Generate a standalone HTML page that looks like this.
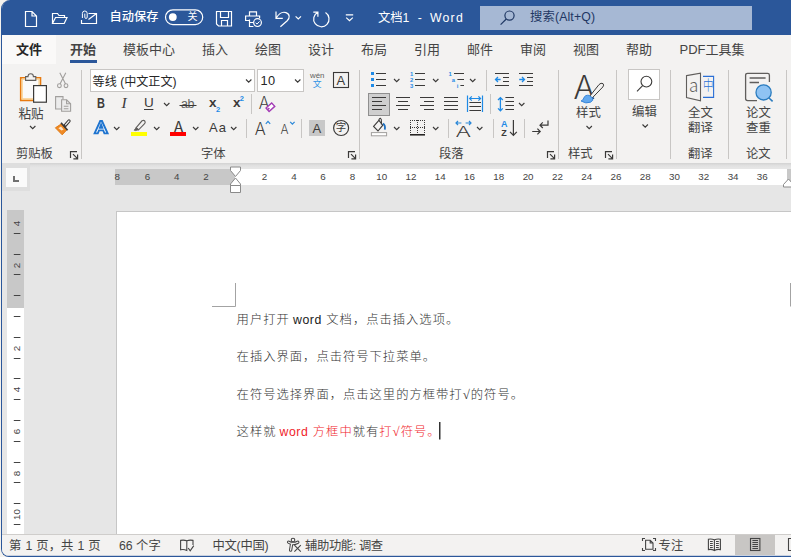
<!DOCTYPE html>
<html lang="zh-CN">
<head>
<meta charset="utf-8">
<title>文档1 - Word</title>
<style>
*{box-sizing:border-box;margin:0;padding:0}
html,body{width:791px;height:557px;overflow:hidden;background:#f4f2ee}
body{font-family:"Liberation Sans","Noto Sans CJK SC",sans-serif;color:#444;position:relative;font-size:13px}
.abs{position:absolute}
#win{position:absolute;left:1px;top:0;width:790px;height:557px;background:#e6e6e6;border-left:1px solid #2b579a;border-bottom:1px solid #2b579a;border-top-left-radius:9px;border-bottom-left-radius:8px;overflow:hidden}
#edge{position:absolute;left:0;top:0;width:2px;height:557px;background:#f4f1ec}
#title{position:absolute;left:0;top:0;width:791px;height:35px;background:#2b579a}
.t{position:absolute;white-space:nowrap;color:#fff}
#search{position:absolute;left:480px;top:6px;width:272px;height:24px;background:#a6b8d4}
#tabs{position:absolute;left:0;top:35px;width:791px;height:30px;background:#f3f2f1}
.tab{position:absolute;top:35px;height:29px;line-height:29px;font-size:13px;color:#444;white-space:nowrap}
#filetab{position:absolute;left:2px;top:35px;width:54px;height:30px;background:#faf9f8}
#ribbon{position:absolute;left:0;top:64px;width:791px;height:99px;background:#f3f2f1}
#shadow{position:absolute;left:0;top:163px;width:791px;height:5px;background:linear-gradient(#d2d2d2,#e0e0e0 50%,#e6e6e6)}
.lbl{position:absolute;font-size:12.3px;color:#444;white-space:nowrap;line-height:16px}
.ng{font-size:5.9px;line-height:6px;font-weight:bold;color:#1e8ae6}
.box{position:absolute;background:#fff;border:1px solid #c8c6c4}
svg{position:absolute;left:0;top:0;overflow:visible}
#status{position:absolute;left:0;top:534px;width:791px;height:21px;background:#f3f2f1;border-top:1px solid #cfcdcb}
.s{position:absolute;top:537.7px;font-size:12.3px;line-height:16px;color:#444;white-space:nowrap}
#botline{position:absolute;left:0;top:555px;width:791px;height:1px;background:#c9d1df}
#page{position:absolute;left:116px;top:211px;width:680px;height:323px;background:#fff;border-left:1px solid #c6c6c6;border-top:1px solid #c6c6c6}
.doc{position:absolute;left:236.6px;font-size:12.3px;line-height:16px;color:#333;white-space:nowrap;letter-spacing:1px;font-weight:300}
.red{color:#f0242a}
.rn{position:absolute;top:170.3px;font-size:9.8px;line-height:13px;color:#444;width:24px;text-align:center;white-space:nowrap}
.vn{position:absolute;left:4.1px;margin-top:0.5px;font-size:9.8px;line-height:13px;color:#444;width:24px;height:13px;text-align:center;transform:rotate(-90deg);white-space:nowrap}
</style>
</head>
<body>
<div id="win">
<div style="position:absolute;left:-2px;top:0;width:791px;height:557px">
<div id="title"></div>
<div id="search"></div>
<span class="t" style="left:109.6px;top:8.6px;font-size:12.2px;line-height:16px;font-weight:500">自动保存</span>
<span class="t" style="left:378px;top:9.5px;font-size:12.3px;line-height:16px">文档1</span><span class="t" style="left:417.8px;top:9.5px;font-size:12.3px;line-height:16px">-</span><span class="t" style="left:430px;top:9.5px;font-size:12.3px;line-height:16px;letter-spacing:1.2px">Word</span>
<span class="t" style="left:530px;top:9px;font-size:12.3px;line-height:16px;color:#1f3763;letter-spacing:0.15px">搜索(Alt+Q)</span>
<span class="t" style="left:187.6px;top:10px;font-size:10px;line-height:14px">关</span>
<svg width="791" height="35" viewBox="0 0 791 35" fill="none" stroke="#fff" stroke-width="1.2" stroke-linejoin="miter">
<!-- new doc -->
<path d="M25.5 11.5 H32 L36.5 16 V26.5 H25.5 Z M32 11.5 V16 H36.5"/>
<!-- open folder -->
<path d="M52.5 23.5 V13.5 H57.5 L59 15.5 H64.5 V17.5 M52.5 23.5 L55.5 17.5 H67 L64.2 23.5 Z"/>
<!-- mail w/ clip -->
<path d="M88.5 13.5 H96.5 V23.5 H81.5 V20 M96.5 13.5 L88.5 19.5"/>
<path d="M82.4 18 V13.4 a2.4 2.4 0 0 1 4.8 0 V17.2 a1.2 1.2 0 0 1 -2.4 0 V13.6" stroke-width="1"/>
<!-- toggle -->
<rect x="165.5" y="9.8" width="37.2" height="14.8" rx="7.4"/>
<circle cx="172.8" cy="17.1" r="3.9" fill="#fff" stroke="none"/>
<!-- save -->
<path d="M216.5 11.5 H231.5 V26 H218.5 L216.5 24 Z M220.5 11.5 V17.5 H228.5 V11.5 M221.5 26 V20.5 H227.5 V26"/>
<!-- printer check -->
<path d="M249.5 16 V11.8 H256.5 V16 M253 22.5 H249.5 M249.5 20.5 H245.6 V16 H259.6 V18.2 M249.5 19.5 V26.5 H253.4"/>
<circle cx="257.5" cy="22.6" r="3.9"/>
<path d="M255.6 22.7 L257 24.1 L259.5 21.4" stroke-width="1"/>
<!-- undo -->
<path d="M276 11.4 V18.3 H282.8 M276.2 18 C279 13.5 283 11.6 286 12.6 C289.8 13.8 290.2 18 287.2 20.8 L280.4 26.8"/>
<path d="M295.6 16.4 L298.3 18.9 L301 16.4"/>
<!-- redo -->
<path d="M313.3 12.1 H317.9 V16.7 M317.9 12.2 A7.7 7.7 0 1 0 325.5 12.6"/>
<!-- customize -->
<path d="M345.8 14.9 H353.2 M346.2 17.6 L349.5 20.6 L352.8 17.6"/>
<!-- search icon -->
<g stroke="#1f3763" stroke-width="1.2"><circle cx="509.5" cy="15.6" r="4.6"/><path d="M506.3 19 L500.6 24.6"/></g>
</svg>
<div id="tabs"></div><div id="filetab"></div>
<span class="tab" style="left:16px;font-weight:bold;color:#262626">文件</span>
<span class="tab" style="left:70px;font-weight:bold;color:#444">开始</span>
<div class="abs" style="left:70px;top:60px;width:27px;height:3px;background:#2b579a"></div>
<span class="tab" style="left:123px">模板中心</span>
<span class="tab" style="left:202px">插入</span>
<span class="tab" style="left:255px">绘图</span>
<span class="tab" style="left:308px">设计</span>
<span class="tab" style="left:361px">布局</span>
<span class="tab" style="left:414px">引用</span>
<span class="tab" style="left:467px">邮件</span>
<span class="tab" style="left:520px">审阅</span>
<span class="tab" style="left:573px">视图</span>
<span class="tab" style="left:626px">帮助</span>
<span class="tab" style="left:679.5px">PDF工具集</span>
<div id="ribbon"></div>
<div id="shadow"></div>
<!-- ribbon boxes -->
<div class="box" style="left:90px;top:69px;width:165px;height:23px"></div>
<div class="box" style="left:257px;top:69px;width:47px;height:23px"></div>
<div class="abs" style="left:368px;top:93px;width:22px;height:23px;background:#cfcfcf;border:1px solid #8f8f8f"></div>
<div class="abs" style="left:309px;top:120px;width:16px;height:16px;background:#c8c8c8"></div>
<div class="box" style="left:628px;top:69px;width:32px;height:31px"></div>
<!-- ribbon texts -->
<span class="lbl" style="left:18.5px;top:105.8px;font-size:12.6px">粘贴</span>
<span class="lbl" style="left:16px;top:146px">剪贴板</span>
<span class="lbl" style="left:92.6px;top:73.6px;font-size:12.1px;color:#262626">等线 (中文正文)</span>
<span class="lbl" style="left:260.6px;top:72.8px;font-size:12.8px;color:#262626;letter-spacing:0.2px">10</span>
<span class="lbl" style="left:201px;top:145.5px">字体</span>
<span class="lbl" style="left:439px;top:145.5px">段落</span>
<span class="lbl" style="left:568px;top:145.5px">样式</span>
<span class="lbl" style="left:576px;top:105px;font-size:12.4px">样式</span>
<span class="lbl" style="left:632px;top:103.7px;font-size:12.4px">编辑</span>
<span class="lbl" style="left:688px;top:105.2px;font-size:12.4px">全文</span>
<span class="lbl" style="left:688px;top:119.7px;font-size:12.4px">翻译</span>
<span class="lbl" style="left:688px;top:145.5px">翻译</span>
<span class="lbl" style="left:746px;top:105.2px;font-size:12.4px">论文</span>
<span class="lbl" style="left:746px;top:119.7px;font-size:12.4px">查重</span>
<span class="lbl" style="left:746px;top:145.5px">论文</span>
<!-- font row 2 glyph buttons -->
<span class="lbl" style="left:97px;top:95px;font-size:14.8px;font-weight:bold;color:#3b3a39;transform:scaleX(.74);transform-origin:0 0">B</span>
<span class="lbl" style="left:121.5px;top:95px;font-size:15.5px;font-style:italic;font-family:'Liberation Serif',serif;color:#3b3a39">I</span>
<span class="lbl" style="left:144px;top:94.5px;font-size:13.5px;color:#3b3a39">U</span>
<span class="lbl" style="left:181px;top:96px;font-size:12.5px;color:#605e5c;letter-spacing:-0.5px">ab</span>
<span class="lbl" style="left:209px;top:95px;font-size:13.5px;font-weight:bold;color:#3b3a39">x</span>
<span class="lbl" style="left:216px;top:105.5px;font-size:7.5px;font-weight:bold;color:#1e8ae6;line-height:8px">2</span>
<span class="lbl" style="left:233px;top:95px;font-size:13.5px;font-weight:bold;color:#3b3a39">x</span>
<span class="lbl" style="left:239.8px;top:95px;font-size:7.5px;font-weight:bold;color:#1e8ae6;line-height:8px">2</span>
<span class="lbl" style="left:259px;top:90.5px;font-size:17.5px;line-height:22px;color:#3b3a39;font-weight:300;font-family:'Noto Sans CJK SC','Liberation Sans',sans-serif">A</span>
<!-- font row 3 -->
<span class="lbl" style="left:174px;top:115.5px;font-size:15px;line-height:20px;color:#3b3a39;font-weight:400;font-family:'Noto Sans CJK SC','Liberation Sans',sans-serif">A</span>
<span class="lbl" style="left:209px;top:120px;font-size:13px;color:#3b3a39;letter-spacing:1.2px">Aa</span>
<span class="lbl" style="left:255px;top:116.4px;font-size:17.8px;line-height:22px;color:#3b3a39;font-weight:300;font-family:'Noto Sans CJK SC','Liberation Sans',sans-serif">A</span>
<span class="lbl" style="left:280.8px;top:120.8px;font-size:12.8px;line-height:16px;color:#3b3a39;font-weight:300;font-family:'Noto Sans CJK SC','Liberation Sans',sans-serif">A</span>
<span class="lbl" style="left:312.6px;top:120.6px;font-size:13px;color:#3b3a39">A</span>
<span class="lbl" style="left:335.8px;top:121.4px;font-size:10.5px;line-height:13px;color:#3b3a39">字</span>
<span class="lbl" style="left:310px;top:71.4px;font-size:7.9px;line-height:9px;color:#605e5c">wén</span>
<span class="lbl" style="left:312.8px;top:78.6px;font-size:8.8px;line-height:11px;color:#2f95e6">文</span>
<span class="lbl" style="left:336.5px;top:72.5px;font-size:13px;color:#3b3a39">A</span>
<!-- paragraph text glyphs -->
<span class="lbl" style="left:455.6px;top:121.6px;font-size:15px;line-height:18px;color:#3b3a39;font-weight:300;font-family:'Noto Sans CJK SC','Liberation Sans',sans-serif;transform:scaleX(1.66);transform-origin:0 0">A</span>
<span class="lbl" style="left:501px;top:118.6px;font-size:9px;line-height:10px;font-weight:bold;color:#1e8ae6">A</span>
<span class="lbl" style="left:501.2px;top:127.6px;font-size:9px;line-height:10px;font-weight:bold;color:#3b3a39">Z</span>
<!-- numbering glyphs -->
<span class="lbl ng" style="left:410px;top:71.2px">1</span>
<span class="lbl ng" style="left:410px;top:77.2px">2</span>
<span class="lbl ng" style="left:410px;top:83.2px">3</span>
<span class="lbl ng" style="left:448.6px;top:71.2px">1</span>
<span class="lbl ng" style="left:451.8px;top:77px">a</span>
<span class="lbl ng" style="left:456.8px;top:83px">i</span>
<!-- styles big A -->
<span class="lbl" style="left:573.6px;top:67.6px;font-size:33px;line-height:34px;color:#3b3a39;font-weight:300;font-family:'Noto Sans CJK SC','Liberation Sans',sans-serif;transform:scaleX(1.05);transform-origin:0 0">A</span>
<!-- translate glyphs -->
<span class="lbl" style="left:689.4px;top:72px;font-size:18.5px;line-height:24px;color:#605e5c;font-weight:300;font-family:'Noto Sans CJK SC','Liberation Sans',sans-serif;transform:scaleX(.92);transform-origin:0 0">a</span>
<span class="lbl" style="left:702.6px;top:77px;font-size:13.5px;line-height:18px;color:#2b6fd6;font-weight:300;transform:scaleX(.78);transform-origin:0 0">中</span>
<svg width="791" height="170" viewBox="0 0 791 170" fill="none" stroke="#3b3a39" stroke-width="1.1">
<defs>
<path id="chev" d="M0 0 L2.7 2.6 L5.4 0" fill="none" stroke="#3b3a39" stroke-width="1.15"/>
<path id="launch" d="M0.5 7 V0.6 H7 M3 3.2 L7.5 7.7 M7.6 3.6 V7.8 H3.4" fill="none" stroke="#3b3a39" stroke-width="1.2"/>
</defs>
<!-- separators -->
<g stroke="#c8c6c4" stroke-width="1">
<path d="M81.5 70 V159 M359.5 70 V159 M558.5 70 V159 M616.5 70 V159 M670.5 70 V159 M728.5 70 V159 M786.5 70 V159"/>
<path d="M251.5 94 V114 M246.5 119 V138 M301.5 119 V138 M486.5 70 V91 M490.5 94 V114 M448.5 119 V138 M493.5 119 V138 M524.5 119 V138"/>
</g>
<!-- launchers -->
<use href="#launch" x="70" y="151"/><use href="#launch" x="348" y="151"/><use href="#launch" x="547" y="151"/><use href="#launch" x="605" y="151"/>
<!-- chevrons -->
<use href="#chev" x="30" y="126"/>
<use href="#chev" x="246" y="79.5"/><use href="#chev" x="295" y="79.5"/>
<use href="#chev" x="164" y="103"/>
<use href="#chev" x="114" y="127"/><use href="#chev" x="154" y="127"/><use href="#chev" x="193" y="127"/><use href="#chev" x="231" y="127"/>
<use href="#chev" x="394" y="79"/><use href="#chev" x="433" y="79"/><use href="#chev" x="470" y="79"/>
<use href="#chev" x="519" y="103"/>
<use href="#chev" x="394" y="127"/><use href="#chev" x="433" y="127"/><use href="#chev" x="477" y="127"/>
<use href="#chev" x="586.5" y="126"/><use href="#chev" x="642.5" y="124.5"/>
<!-- paste -->
<rect x="22.6" y="79.6" width="16" height="19" fill="#fafafa" stroke="none"/><path d="M26 77.7 H20.7 V100.4 H33 M35.5 77.7 H40.5 V85" stroke="#e87a10" stroke-width="1.6"/>
<path d="M22.1 79.1 H26 M35.5 79.1 H39.1 V85 M22.1 79.1 V99 H33" stroke="#fbd08c" stroke-width="1.3"/>
<path d="M25.6 80.4 V76.6 H28 C28 72.8 33.4 72.8 33.4 76.6 H35.8 V80.4 Z" stroke="#605e5c" fill="#f3f2f1"/>
<rect x="33.6" y="85.6" width="12.8" height="16.6" fill="#fff" stroke="#3b3a39" stroke-width="1.2"/>
<!-- scissors (disabled) -->
<g stroke="#a19f9d" stroke-width="1.1"><path d="M59.8 72.8 L65.6 84 M65.8 72.8 L60 84"/><circle cx="59.4" cy="85.7" r="1.9"/><circle cx="66" cy="85.7" r="1.9"/></g>
<!-- copy (disabled) -->
<g stroke="#a19f9d" stroke-width="1.1"><path d="M63 99.6 V96.6 H55.6 V109 H61.6" fill="#ececec"/><path d="M61.6 99.8 H66.6 L70.6 103.8 V111.2 H61.6 Z" fill="#ececec"/><path d="M66.6 99.8 V103.8 H70.6 M63.8 106.2 H68.4 M63.8 108.8 H68.4" /></g>
<!-- format painter -->
<path d="M55.4 127.8 L61.2 124 L66.6 130 L62.2 134.8 Z" fill="#f08a24" stroke="#e07a14" stroke-width="1"/><path d="M58.4 128.2 L61 126.6 L63.6 129.4 L61.6 130.6 Z" fill="#fce6cc" stroke="none"/>
<path d="M61 122.8 L67.6 130.2" stroke="#3b3a39" stroke-width="1.7"/><path d="M65 125.6 L69 121" stroke="#3b3a39" stroke-width="3.4" stroke-linecap="round"/><path d="M65.6 124.9 L69 121" stroke="#f3f2f1" stroke-width="1.2" stroke-linecap="round"/>
<!-- underline bar, strike -->
<path d="M144 109.5 H153.4" stroke-width="1.1"/>
<path d="M179.5 105.5 H196.5" stroke-width="1"/>
<!-- clear formatting eraser -->
<g transform="rotate(-42 270.4 107.2)"><rect x="266.6" y="104.9" width="7.6" height="4.6" stroke="#a33bb5" stroke-width="1.4" fill="#fff"/><path d="M267 107.2 H269" stroke="#a33bb5" stroke-width="1.6"/></g>
<!-- text effects A -->
<path d="M94.6 133.4 L100.2 121 H102 L107.6 133.4 H104.4 L103.2 130.4 H99 L97.8 133.4 Z M99.9 127.8 H102.3 L101.1 124.6 Z" stroke="#1f74cf" stroke-width="1.9" fill="#fff"/>
<!-- highlighter -->
<rect x="131" y="132" width="16" height="4" fill="#ffff00" stroke="none"/>
<path d="M136 127.8 L142 120.8 Q144 119.8 145 121.4 Q145.6 122.6 144.6 123.6 L138.6 129.8 Z" stroke="#605e5c"/>
<path d="M136 127.8 L138.6 129.8 L135.4 130.6 L134.2 130.2 Z" fill="#605e5c" stroke="#605e5c" stroke-width="0.8"/>
<!-- font color bar -->
<rect x="170" y="132" width="16" height="4" fill="#ff0000" stroke="none"/>
<!-- grow/shrink carets -->
<path d="M265.8 123.8 L268 121.4 L270.2 123.8" stroke="#2b88d8" stroke-width="1.2"/>
<path d="M290.2 121.8 L292.4 124.2 L294.6 121.8" stroke="#2b88d8" stroke-width="1.2"/>
<!-- char border box / enclosed char -->
<rect x="333.5" y="72.5" width="15" height="15" stroke="#3b3a39" stroke-width="1.1"/>
<circle cx="341.1" cy="128" r="7.5" stroke="#3b3a39" stroke-width="1.2"/>
<!-- bullets -->
<g fill="#1e8ae6" stroke="none"><rect x="371" y="72" width="3" height="3"/><rect x="371" y="78" width="3" height="3"/><rect x="371" y="84" width="3" height="3"/></g>
<path d="M376 73.5 H386 M376 79.5 H386 M376 85.5 H386"/>
<!-- numbering lines -->
<path d="M415 73.5 H425 M415 79.5 H425 M415 85.5 H425"/>
<!-- multilevel lines -->
<path d="M454 73.5 H464 M457.4 79.5 H464 M460.4 85.5 H464"/>
<!-- decrease indent -->
<path d="M495 73.5 H509 M503 77.5 H509 M503 81.5 H509 M495 85.5 H509"/>
<path d="M495.6 79.5 H500.6 M498 77 L495.5 79.5 L498 82" stroke="#1e8ae6" stroke-width="1.3"/>
<!-- increase indent -->
<path d="M519 73.5 H533 M527 77.5 H533 M527 81.5 H533 M519 85.5 H533"/>
<path d="M519.2 79.5 H524.4 M522 77 L524.5 79.5 L522 82" stroke="#1e8ae6" stroke-width="1.3"/>
<!-- align icons -->
<path d="M372 97.5 H386 M372 101.5 H382 M372 105.5 H386 M372 109.5 H382" stroke-width="1.1"/>
<path d="M396 97.5 H410 M398 101.5 H408 M396 105.5 H410 M398 109.5 H408" stroke-width="1.1"/>
<path d="M420 97.5 H434 M424 101.5 H434 M420 105.5 H434 M424 109.5 H434" stroke-width="1.1"/>
<path d="M444 97.5 H458 M444 101.5 H458 M444 105.5 H458 M444 109.5 H458" stroke-width="1.1"/>
<!-- distributed -->
<path d="M467.5 95.6 V112 M482.5 95.6 V112 M469.6 98.5 H480.6 M471.8 96.3 L469.6 98.5 L471.8 100.7 M478.4 96.3 L480.6 98.5 L478.4 100.7" stroke="#1e8ae6" stroke-width="1.2"/>
<path d="M469.4 102.5 H481 M469.4 106.5 H481 M469.4 110.5 H481" stroke-width="1.1"/>
<!-- line spacing -->
<path d="M500.4 97.6 V110.8 M498 100 L500.4 97.6 L502.8 100 M498 108.4 L500.4 110.8 L502.8 108.4" stroke="#1e8ae6" stroke-width="1.3"/>
<path d="M505.4 97.5 H514 M505.4 101.5 H514 M505.4 105.5 H514 M505.4 109.5 H514" stroke-width="1.1"/>
<!-- shading bucket -->
<rect x="371.4" y="132.6" width="15.2" height="3.2" fill="#fff" stroke="#a19f9d" stroke-width="1"/>
<path d="M373.6 126.4 L378.9 120.4 L382.8 125.2 L378 131 Z" />
<path d="M378.9 120.6 Q379.2 118 380.6 118.4 Q381.6 118.8 381.4 121.4 V124.6"/>
<path d="M383 123.6 Q385.6 125.4 384.8 129.6" stroke="#1e6fc0" stroke-width="1.8"/>
<!-- borders -->
<path d="M410 120.5 H425 M410 127.5 H425 M410.5 120 V134 M417.5 120 V134 M424.5 120 V134" stroke-dasharray="1 1" stroke-width="1" stroke="#3b3a39"/>
<path d="M410 134.8 H425" stroke-width="1.5" stroke="#1b1a19"/>
<!-- char scaling arrows -->
<path d="M456 123 H461.4 M458 121 L456 123 L458 125 M465.6 123 H471 M469 121 L471 123 L469 125" stroke="#2b88d8" stroke-width="1.2"/>
<!-- sort arrow -->
<path d="M513.4 120 V135.2 M510 131.8 L513.4 135.4 L516.8 131.8" stroke-width="1.2"/>
<!-- show marks -->
<path d="M532.2 131.5 H540.2 M537.4 128.7 L540.2 131.5 L537.4 134.3 M548 120.4 V125.2 H540 M542.8 122.4 L540 125.2 L542.8 128" stroke-width="1.2"/>
<!-- styles brush -->
<path d="M603 83.6 Q601 82.4 599 84.6 L589.6 96.4 L591.8 98.4 L602.8 87 Q604.4 85 603 83.6 Z" fill="#f3f2f1" stroke="#3b3a39" stroke-width="1"/>
<path d="M589.2 95.4 Q585 94.6 583.8 98 Q583.2 100.4 581 101 Q586 104.2 590.6 102.2 Q594 100.4 592.4 97.8 Z" fill="#62a8ee" stroke="#2f7fd6" stroke-width="0.9"/>
<!-- edit magnifier -->
<circle cx="646.4" cy="81.6" r="5.4" stroke-width="1.1"/><path d="M642.6 85.6 L637 91.4" stroke-width="1.1"/>
<!-- translate icon -->
<path d="M686.5 75.6 L700.5 73.2 V100.8 L686.5 97.6 Z" stroke="#605e5c" stroke-width="1.1"/>
<path d="M703 76.4 H713.6 V97.4 H703" stroke="#2b6fd6" stroke-width="1.1"/>
<!-- paper check -->
<path d="M757 100.6 H747.6 Q745.6 100.6 745.6 98.6 V75.2 Q745.6 73.4 747.6 73.4 H767.6 Q769.4 73.4 769.4 75.2 V82" stroke="#605e5c" stroke-width="1.3"/>
<path d="M749.6 78 H765.6 M749.6 82.4 H759" stroke="#605e5c" stroke-width="1.5"/>
<circle cx="763.6" cy="92.4" r="7.6" fill="#8fc3f3" stroke="#2b7cbf" stroke-width="1.3"/>
<path d="M769 98 L772.6 101.4" stroke="#2b7cbf" stroke-width="1.6"/>
</svg>
<div class="abs" style="left:115px;top:169px;width:120px;height:16px;background:#c8c8c8"></div>
<div class="abs" style="left:235px;top:169px;width:552px;height:16px;background:#fff"></div>
<div class="abs" style="left:787px;top:169px;width:4px;height:16px;background:#c8c8c8"></div>
<span class="rn" style="left:105.3px">8</span><span class="rn" style="left:135.5px">6</span><span class="rn" style="left:164.7px">4</span><span class="rn" style="left:194.0px">2</span><span class="rn" style="left:252.6px">2</span><span class="rn" style="left:281.9px">4</span><span class="rn" style="left:311.1px">6</span><span class="rn" style="left:340.4px">8</span><span class="rn" style="left:369.7px">10</span><span class="rn" style="left:399.0px">12</span><span class="rn" style="left:428.3px">14</span><span class="rn" style="left:457.5px">16</span><span class="rn" style="left:486.8px">18</span><span class="rn" style="left:516.1px">20</span><span class="rn" style="left:545.4px">22</span><span class="rn" style="left:574.7px">24</span><span class="rn" style="left:603.9px">26</span><span class="rn" style="left:633.2px">28</span><span class="rn" style="left:662.5px">30</span><span class="rn" style="left:691.8px">32</span><span class="rn" style="left:721.1px">34</span><span class="rn" style="left:750.3px">36</span>
<div class="abs" style="left:2px;top:163px;width:28px;height:28px;background:#dedede"></div><div class="abs" style="left:6px;top:168px;width:20.5px;height:19px;background:#fafafa"></div><div class="abs" style="left:13px;top:176px;width:2px;height:6px;background:#707070"></div><div class="abs" style="left:13px;top:180px;width:6px;height:2px;background:#707070"></div>
<div class="abs" style="left:7px;top:210px;width:17px;height:98px;background:#c8c8c8"></div>
<div class="abs" style="left:7px;top:308px;width:17px;height:226px;background:#fff"></div>
<span class="vn" style="top:216.5px">4</span><span class="vn" style="top:258.1px">2</span><span class="vn" style="top:341.3px">2</span><span class="vn" style="top:382.9px">4</span><span class="vn" style="top:424.5px">6</span><span class="vn" style="top:466.1px">8</span><span class="vn" style="top:507.7px">10</span>
<svg width="40" height="557" viewBox="0 0 40 557" stroke="#444" stroke-width="1.2" fill="none"><path d="M13.8 233.5 H20.4 M13.8 254.5 H20.4 M13.8 274.5 H20.4 M13.8 295.5 H20.4 M13.8 316.5 H20.4 M13.8 337.5 H20.4 M13.8 358.5 H20.4 M13.8 378.5 H20.4 M13.8 399.5 H20.4 M13.8 420.5 H20.4 M13.8 441.5 H20.4 M13.8 462.5 H20.4 M13.8 482.5 H20.4 M13.8 503.5 H20.4 M13.8 524.5 H20.4 "/></svg>
<svg width="791" height="200" viewBox="0 0 791 200" fill="#fff" stroke="#8a8a8a" stroke-width="1"><path d="M230.5 167 H240.5 V170.5 L235.5 176.5 L230.5 170.5 Z M235.5 178 L240.5 184 V185.5 H230.5 V184 Z M230.5 185.5 H240.5 V192.5 H230.5 Z"/><path d="M783.5 187 V184.5 L788.5 179 L793.5 184.5 V187 Z"/></svg>
<div id="page"></div>
<svg width="791" height="557" viewBox="0 0 791 557" fill="none" stroke="#a3a3a3" stroke-width="1"><path d="M235.5 283 V306.5 H212 M790.5 283 V306.5"/><path d="M439.8 422 V439.6" stroke="#000" stroke-width="1.2"/></svg>
<div class="doc" style="top:311.5px">用户打开 <span style="letter-spacing:0.55px;font-weight:400;color:#1a1a1a;margin-left:-1.2px">word</span> 文档，点击插入选项。</div>
<div class="doc" style="top:349.4px">在插入界面，点击符号下拉菜单。</div>
<div class="doc" style="top:386.7px">在符号选择界面，点击这里的方框带打<span style="font-family:'Liberation Serif','DejaVu Serif',serif;font-size:13px;line-height:12px;font-weight:400">√</span>的符号。</div>
<div class="doc" style="top:423.6px">这样就 <span class="red"><span style="letter-spacing:0.55px;font-weight:400;margin-left:-1.4px">word</span> 方框中</span>就有<span class="red">打<span style="font-family:'Liberation Serif','DejaVu Serif',serif;font-size:13px;line-height:12px;font-weight:400">√</span>符号。</span></div>
<div id="status"></div>
<div class="abs" style="left:735px;top:535px;width:40px;height:20px;background:#c8c6c4"></div>
<span class="s" style="left:9px;word-spacing:0.7px">第 1 页，共 1 页</span>
<span class="s" style="left:119px">66 个字</span>
<span class="s" style="left:212.6px;letter-spacing:-0.3px">中文(中国)</span>
<span class="s" style="left:305px;letter-spacing:-0.35px">辅助功能: 调查</span>
<span class="s" style="left:658.6px">专注</span>
<svg width="791" height="557" viewBox="0 0 791 557" fill="none" stroke="#444" stroke-width="1.1">
<path d="M186.8 550.4 V540.8 Q183.8 539.6 180.6 540.4 V549.8 Q183.8 549 186.8 550.4 Z M186.8 540.8 Q189.8 539.6 193 540.4 V545 M188.2 548 L190.2 550.8 L193.8 545.6"/>
<g stroke-linecap="round" stroke-linejoin="round"><path d="M288.6 542.2 Q293 544.8 297.8 542.2 M291.6 544 L290.6 550.2" stroke="#444" stroke-width="3.3"/><path d="M288.6 542.2 Q293 544.8 297.8 542.2 M291.6 544 L290.6 550.2" stroke="#f3f2f1" stroke-width="1.3"/></g><circle cx="293" cy="540" r="1.8" fill="#f3f2f1"/><path d="M294.4 545.2 L300.8 551.6 M300.8 545.2 L294.4 551.6"/>
<path d="M645 538.5 H642.5 V541 M642.5 548 V550.5 H645 M653 538.5 H655.5 V541 M655.5 548 V550.5 H653"/>
<path d="M645.6 540.2 H650.2 L653 543 V549.2 H645.6 Z M650.2 540.2 V543 H653"/>
<path d="M714.4 550.4 V539.8 Q711.4 538.6 708.4 539.2 V549.6 Q711.4 549 714.4 550.4 Z M714.4 539.8 Q717.4 538.6 720.4 539.2 V549.6 Q717.4 549 714.4 550.4" />
<path d="M710 541.5 H712.8 M710 543.5 H712.8 M710 545.5 H712.8 M710 547.5 H712.8 M716 541.5 H718.8 M716 543.5 H718.8 M716 545.5 H718.8 M716 547.5 H718.8" stroke-width="1"/>
<rect x="750.5" y="538.5" width="9.4" height="12"/><path d="M752.4 540.5 H758 M752.4 542.5 H758 M752.4 544.5 H758 M752.4 546.5 H758 M752.4 548.5 H758" stroke-width="1"/>
<path d="M791 538.5 H788.5 V550.5 H791"/>
</svg>
<div id="botline"></div>
</div>
</div>
</body>
</html>
